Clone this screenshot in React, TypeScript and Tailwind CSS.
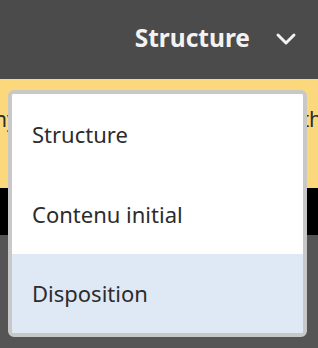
import { ChevronDown } from 'lucide-react';

const items = ['Structure', 'Contenu initial', 'Disposition'];

export default function App() {
  const selected = 2;

  return (
    <div className="relative flex h-[348px] w-[318px] flex-col overflow-hidden bg-[#555555] font-['Noto_Sans',sans-serif]">
      <header className="flex h-[79px] shrink-0 items-center justify-end gap-[20px] bg-[#4b4b4b] pb-[2px] pr-[16px] text-[#f2f2f2]">
        <span className="text-[24.5px] font-bold leading-none">Structure</span>
        <ChevronDown className="h-[32px] w-[32px]" strokeWidth={2.2} />
      </header>

      <div className="flex h-[109px] shrink-0 items-start justify-between bg-[#fcd87d] pt-[26px] text-[21px] leading-[28px] text-[#2c2c2c]">
        <span className="-ml-[6px]">ny,</span>
        <span className="-mr-[4px]">th</span>
      </div>

      <div className="h-[47px] shrink-0 bg-black" />

      <div className="absolute left-[8px] top-[90px] w-[299px] overflow-hidden rounded-[6px] border-4 border-[#c8c8c8] bg-white">
        {items.map((item, i) => (
          <div
            key={item}
            className={`flex items-center px-[20px] text-[22px] text-[#2c2c2c] ${i === 2 ? 'h-[79px]' : 'h-[80px]'} ${
              i === selected ? 'bg-[#dfe8f5]' : 'bg-white'
            }`}
          >
            {item}
          </div>
        ))}
      </div>
    </div>
  );
}
